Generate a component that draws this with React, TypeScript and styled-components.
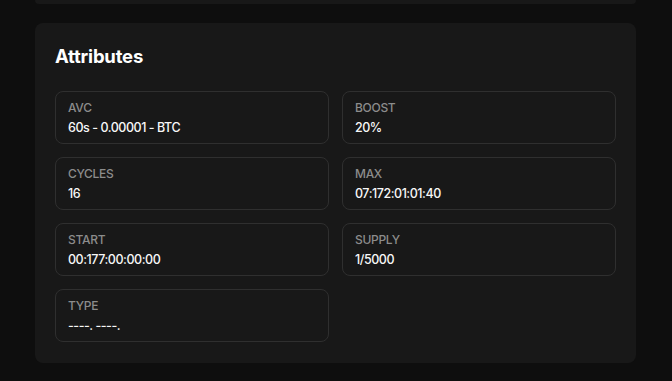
import React from "react";
import styled, { createGlobalStyle } from "styled-components";

const Global = createGlobalStyle`
  html, body {
    margin: 0;
    padding: 0;
    background: #0e0e0e;
    font-family: Inter, "Noto Sans", sans-serif;
    -webkit-font-smoothing: antialiased;
  }
`;

const Page = styled.div`
  display: flex;
  flex-direction: column;
  gap: 19px;
  padding: 0 36px 19px 35px;
  min-height: 381px;
  box-sizing: border-box;
`;

const PrevCard = styled.div`
  height: 4px;
  background: #181818;
  border-radius: 0 0 8px 8px;
`;

const Card = styled.section`
  background: #181818;
  border-radius: 8px;
  padding: 20px 20px 21px 20px;
  display: flex;
  flex-direction: column;
  gap: 22px;
`;

const Title = styled.h2`
  margin: 0;
  font-size: 18.5px;
  line-height: 26px;
  font-weight: 700;
  color: #ffffff;
  letter-spacing: -0.2px;
`;

const Grid = styled.div`
  display: grid;
  grid-template-columns: 1fr 1fr;
  gap: 13px;
`;

const Cell = styled.div`
  border: 1px solid #2f2f2f;
  border-radius: 8px;
  padding: 8px 12px 6px;
  display: flex;
  flex-direction: column;
  gap: 3px;
`;

const Label = styled.div`
  font-size: 12px;
  line-height: 16px;
  color: #8c8c8c;
  font-weight: 500;
  letter-spacing: -0.3px;
`;

const Value = styled.div`
  font-size: 12.5px;
  line-height: 18px;
  color: #f7f7f7;
  font-weight: 500;
  letter-spacing: -0.45px;
`;

const items: [string, string][] = [
  ["AVC", "60s - 0.00001 - BTC"],
  ["BOOST", "20%"],
  ["CYCLES", "16"],
  ["MAX", "07:172:01:01:40"],
  ["START", "00:177:00:00:00"],
  ["SUPPLY", "1/5000"],
  ["TYPE", "----. ----."],
];

export default function App() {
  return (
    <>
      <Global />
      <Page>
        <PrevCard />
        <Card>
          <Title>Attributes</Title>
          <Grid>
            {items.map(([l, v]) => (
              <Cell key={l}>
                <Label>{l}</Label>
                <Value>{v}</Value>
              </Cell>
            ))}
          </Grid>
        </Card>
      </Page>
    </>
  );
}
